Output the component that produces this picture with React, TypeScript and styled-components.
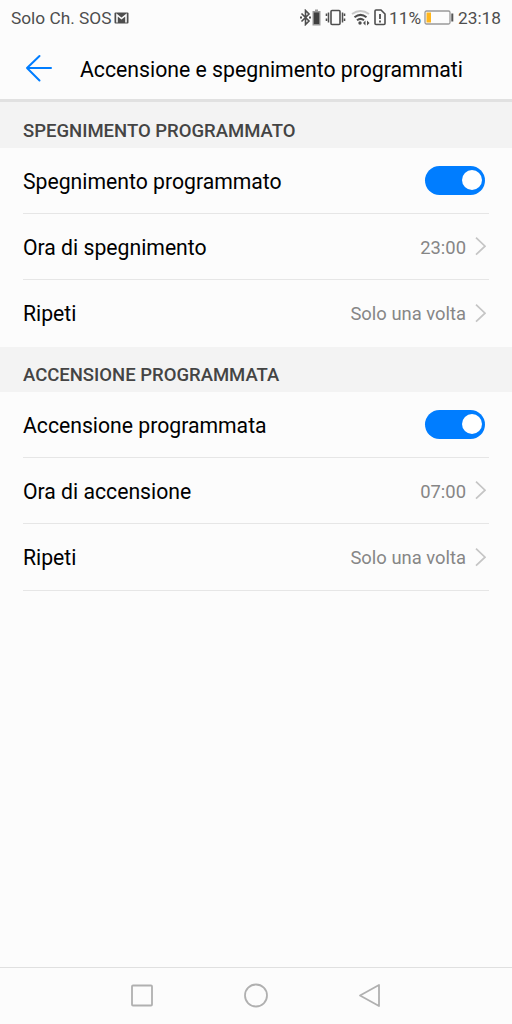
import React from 'react';
import styled, { createGlobalStyle } from 'styled-components';

const GlobalStyle = createGlobalStyle`
  * { box-sizing: border-box; }
  body { margin: 0; background: #fcfcfc; font-family: Roboto, "Noto Sans", sans-serif; }
`;

const Screen = styled.div`
  width: 512px;
  height: 1024px;
  display: flex;
  flex-direction: column;
  background: #fcfcfc;
  color: #000;
  overflow: hidden;
`;

const StatusBar = styled.div`
  height: 37px;
  flex: none;
  display: flex;
  align-items: center;
  justify-content: space-between;
  padding: 0 11px 2px;
  color: #4e4e4e;
  font-size: 17.3px;
  white-space: nowrap;
`;

const StatusGroup = styled.div`
  display: flex;
  align-items: center;
`;

const StatusIcon = styled.svg<{ $after?: number }>`
  display: block;
  flex: none;
  margin-right: ${(p) => p.$after ?? 0}px;
`;

const StatusText = styled.span<{ $width: number }>`
  width: ${(p) => p.$width}px;
`;

const Header = styled.header`
  height: 65px;
  flex: none;
  display: flex;
  align-items: center;
  padding-left: 25px;
  border-bottom: 3px solid #e1e1e1;
`;

const BackButton = styled.button`
  width: 55px;
  padding: 0;
  border: 0;
  background: none;
  line-height: 0;
  text-align: left;
`;

const Title = styled.h1`
  margin: 3px 0 0;
  font-size: 21.24px;
  font-weight: 400;
  line-height: 26px;
  white-space: nowrap;
`;

const SectionTitle = styled.h2<{ $height: number }>`
  height: ${(p) => p.$height}px;
  flex: none;
  display: flex;
  align-items: flex-end;
  margin: 0;
  padding: 0 23px 6px;
  background: #f3f3f3;
  color: #444;
  font-size: 18.5px;
  font-weight: 500;
  line-height: 22px;
`;

const Row = styled.div<{ $height: number; $line?: boolean }>`
  height: ${(p) => p.$height}px;
  flex: none;
  display: flex;
  align-items: center;
  justify-content: space-between;
  margin: 0 23px;
  border-bottom: 1px solid ${(p) => (p.$line ? '#e6e6e6' : 'transparent')};
`;

const Label = styled.span`
  font-size: 21.2px;
  line-height: 26px;
  padding-top: 2px;
`;

const Value = styled.span`
  display: flex;
  align-items: center;
  gap: 9px;
  padding-right: 3px;
  color: #868686;
  font-size: 18.4px;
  line-height: 24px;
`;

const ValueText = styled.span`
  padding-top: 2px;
`;

const Toggle = styled.button`
  width: 60px;
  height: 29px;
  margin: 0 4px 0 0;
  padding: 0 3px;
  border: 0;
  border-radius: 15px;
  background: #007dff;
  display: flex;
  align-items: center;
  justify-content: flex-end;
`;

const Knob = styled.span`
  width: 20px;
  height: 20px;
  margin-bottom: 1px;
  border-radius: 50%;
  background: #fff;
`;

const NavBar = styled.nav`
  height: 57px;
  flex: none;
  margin-top: auto;
  display: flex;
  align-items: center;
  justify-content: center;
  gap: 90px;
  border-top: 1px solid #e0e0e0;
`;

const Chevron = () => (
  <svg width="11" height="19" viewBox="0 0 11 19" fill="none" stroke="#c5c5c5" strokeWidth="1.700">
    <path d="M1 .7l9 8.500L1 17.700" />
  </svg>
);

const Switch = ({ label }: { label: string }) => (
  <Toggle role="switch" aria-checked="true" aria-label={label}>
    <Knob />
  </Toggle>
);

const Choice = ({ text }: { text: string }) => (
  <Value>
    <ValueText>{text}</ValueText>
    <Chevron />
  </Value>
);

export default function App() {
  return (
    <Screen>
      <GlobalStyle />
      <StatusBar>
        <StatusGroup>
          <StatusText $width={103}>Solo Ch. SOS</StatusText>
          <StatusIcon width="15" height="12" viewBox="0 0 15 12">
            <rect x="0.500" y="0.500" width="14" height="11" rx="1" fill="#4e4e4e" />
            <path d="M3 10.500V3l4.500 3.600L12 3v7.500" fill="none" stroke="#fcfcfc" strokeWidth="1.600" />
          </StatusIcon>
        </StatusGroup>
        <StatusGroup>
          <StatusIcon width="12" height="17" viewBox="0 0 12 17" fill="none" stroke="#4e4e4e" strokeWidth="1.600">
            <path d="M1.500 4.500l7.500 7.500-3.500 3.500V1.500L9 5l-7.500 7.500" />
            <path d="M0 8.500h2M9 8.500h2" strokeWidth="2" />
          </StatusIcon>
          <StatusIcon width="9" height="17" viewBox="0 0 9 17" $after={4}>
            <path d="M3 .5h3v1.500h2.500v14.500h-8V2H3z" fill="#999" />
            <rect x="1.800" y="3.500" width="5.400" height="11.500" fill="#404040" />
          </StatusIcon>
          <StatusIcon width="21" height="17" viewBox="0 0 21 17" fill="none" stroke="#4e4e4e" strokeWidth="1.600" $after={5}>
            <rect x="6" y="1.500" width="9" height="14" rx="1" />
            <path d="M3.500 3.500v10M17.500 3.500v10" strokeWidth="1.500" />
            <path d="M1.500 4.500v2.500M1.500 9.500v2.500M19.500 4.500v2.500M19.500 9.500v2.500" strokeWidth="1.600" />
          </StatusIcon>
          <StatusIcon width="20" height="17" viewBox="0 0 20 17" fill="none" strokeWidth="2" $after={3}>
            <path d="M1 5Q9.500-1 18 5" stroke="#c8c8c8" />
            <path d="M3.500 8.300Q9.500 3.500 15.500 8.300M6 11.300Q9.500 8.500 13 11.300" stroke="#4e4e4e" />
            <circle cx="9" cy="14" r="1.700" fill="#4e4e4e" />
            <path d="M12 14l2.500-2.500v5zM18.500 14L16 11.500v5z" fill="#4e4e4e" />
          </StatusIcon>
          <StatusIcon width="12" height="17" viewBox="0 0 12 17" fill="none" stroke="#4e4e4e" strokeWidth="1.600" $after={3}>
            <path d="M1 2q0-1 1-1h5l4 4v9.500q0 1-1 1H2q-1 0-1-1z" />
            <path d="M6 5v5M6 11.500v2" strokeWidth="1.800" />
          </StatusIcon>
          <StatusText $width={35}>11%</StatusText>
          <StatusIcon width="30" height="15" viewBox="0 0 30 15" fill="none" $after={4}>
            <rect x="1" y="1" width="25" height="13" rx="1.500" stroke="#999" strokeWidth="1.300" />
            <rect x="2.500" y="2.500" width="4.500" height="10" fill="#ffb61c" />
            <path d="M28.300 3.500v8" stroke="#555" strokeWidth="2" />
          </StatusIcon>
          <StatusText $width={43}>23:18</StatusText>
        </StatusGroup>
      </StatusBar>
      <Header>
        <BackButton aria-label="Indietro">
          <svg width="28" height="28" viewBox="0 0 28 28" fill="none" stroke="#007dff" strokeWidth="2" strokeLinecap="round" strokeLinejoin="round">
            <path d="M14.500 2L2 14l12.500 12.500M2 14h24" />
          </svg>
        </BackButton>
        <Title>Accensione e spegnimento programmati</Title>
      </Header>
      <SectionTitle $height={46}>SPEGNIMENTO PROGRAMMATO</SectionTitle>
      <Row $height={66} $line>
        <Label>Spegnimento programmato</Label>
        <Switch label="Spegnimento programmato" />
      </Row>
      <Row $height={66} $line>
        <Label>Ora di spegnimento</Label>
        <Choice text="23:00" />
      </Row>
      <Row $height={67}>
        <Label>Ripeti</Label>
        <Choice text="Solo una volta" />
      </Row>
      <SectionTitle $height={45}>ACCENSIONE PROGRAMMATA</SectionTitle>
      <Row $height={66} $line>
        <Label>Accensione programmata</Label>
        <Switch label="Accensione programmata" />
      </Row>
      <Row $height={66} $line>
        <Label>Ora di accensione</Label>
        <Choice text="07:00" />
      </Row>
      <Row $height={67} $line>
        <Label>Ripeti</Label>
        <Choice text="Solo una volta" />
      </Row>
      <NavBar>
        <svg width="24" height="26" viewBox="0 0 24 26" fill="none" stroke="#b0b0b0" strokeWidth="1.800">
          <rect x="2" y="2.500" width="20" height="20" rx="1" />
        </svg>
        <svg width="24" height="26" viewBox="0 0 24 26" fill="none" stroke="#b0b0b0" strokeWidth="1.800">
          <circle cx="12" cy="12.500" r="11" />
        </svg>
        <svg width="24" height="26" viewBox="0 0 24 26" fill="none" stroke="#b0b0b0" strokeWidth="1.800" strokeLinejoin="round">
          <path d="M21 2v21L2 12.500z" />
        </svg>
      </NavBar>
    </Screen>
  );
}
